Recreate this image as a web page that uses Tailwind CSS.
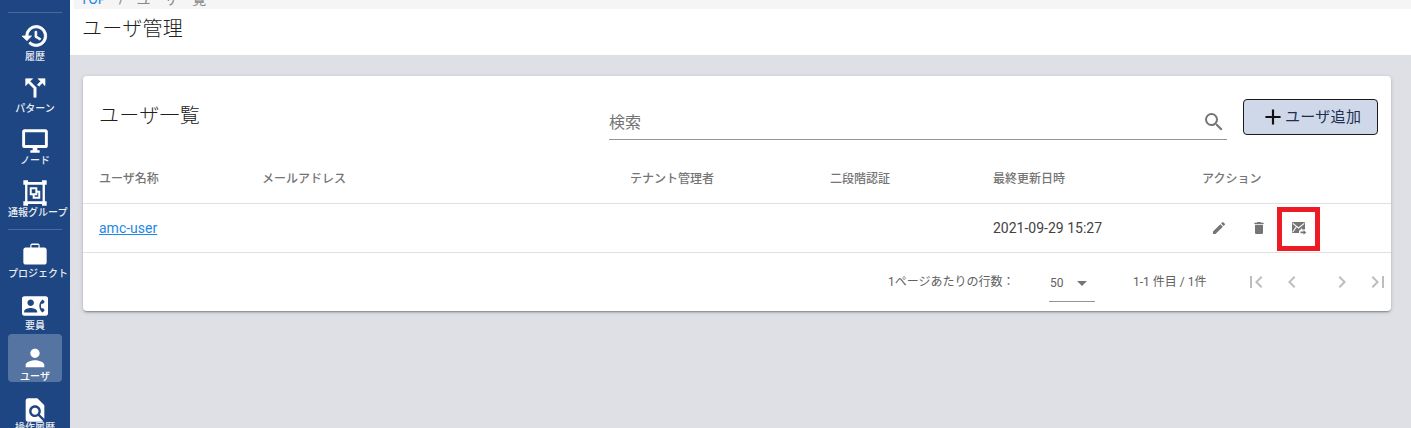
<!DOCTYPE html>
<html lang="ja">
<head>
<meta charset="UTF-8" />
<title>ユーザ管理</title>
<script src="https://cdn.jsdelivr.net/npm/@tailwindcss/browser@4"></script>
</head>
<body class="h-[428px] overflow-hidden bg-[#dfe0e6] font-['Roboto','Noto_Sans_CJK_JP',sans-serif]">
<div class="flex h-[428px]">
  <!-- sidebar -->
  <nav class="w-[70px] shrink-0 bg-[#1e4682] text-[#e8ecf3] flex flex-col items-center overflow-hidden pt-3">
    <div class="w-[54px] border-t border-white/20 mb-[9px] shrink-0"></div>

    <a class="w-[54px] h-[52px] shrink-0 flex flex-col items-center">
      <svg class="w-7 h-7" viewBox="0 0 24 24" fill="#fff" stroke="#fff" stroke-width=".7"><path d="M13 3a9 9 0 0 0-9 9H1l3.9 3.9.1.1L9 12H6a7 7 0 1 1 2.05 4.95L6.64 18.36A9 9 0 1 0 13 3zm-1 5v5l4.25 2.52.77-1.28-3.52-2.09V8z"/></svg>
      <span class="w-full text-center text-[10px] font-medium leading-3 mt-[1px] whitespace-nowrap">履歴</span>
    </a>
    <a class="w-[54px] h-[53px] shrink-0 flex flex-col items-center">
      <svg class="w-7 h-7" viewBox="0 0 24 24" fill="#fff" stroke="#fff" stroke-width=".5"><path d="M14.59 4 16.88 6.29 14 9.17 15.41 10.58 18.29 7.71 20.59 10V4zM10 4H4v6l2.29-2.29L11 12.41V20h2v-8.41L7.71 6.29z"/></svg>
      <span class="w-full text-center text-[10px] font-medium leading-3 mt-[1px] whitespace-nowrap">パターン</span>
    </a>
    <a class="w-[54px] h-[52px] shrink-0 flex flex-col items-center">
      <svg class="w-7 h-7" viewBox="0 0 24 24" fill="#fff"><path d="M21 2H3c-1.1 0-2 .9-2 2v12c0 1.1.9 2 2 2h7v2H8v2h8v-2h-2v-2h7c1.1 0 2-.9 2-2V4c0-1.1-.9-2-2-2zm-.5 13.5h-17v-11h17z"/></svg>
      <span class="w-full text-center text-[10px] font-medium leading-3 whitespace-nowrap">ノード</span>
    </a>
    <a class="w-[54px] h-[50px] shrink-0 flex flex-col items-center">
      <svg class="w-7 h-7" viewBox="0 0 24 24" fill="#fff"><path fill-rule="evenodd" d="M2 1h4v1.500h12V1h4v4h-1.500v14H22v4h-4v-1.500H6V23H2v-4h1.500V5H2zm3.500 4v14h13V5zm2 2h6.500v3h2.500v7H10v-3H7.500zm1.700 1.700v3.600h3.100V8.700zm2.500 5.300v1.300h3.100v-3.600h-.8V14z"/></svg>
      <span class="w-full text-center text-[10px] font-medium leading-3 whitespace-nowrap">通報グループ</span>
    </a>
    <div class="w-[54px] border-t border-white/20 mb-[10px] shrink-0"></div>

    <a class="w-[54px] h-[52px] shrink-0 flex flex-col items-center">
      <svg class="w-7 h-7" viewBox="0 0 24 24" fill="#fff"><path d="M20 6.500h-4V4.500C16 3.400 15.100 3 14 3h-4C8.900 3 8 3.400 8 4.500v2H4c-1.100 0-2 .9-2 2V19c0 1.100.9 2 2 2h16c1.100 0 2-.9 2-2V8.500c0-1.100-.9-2-2-2zm-5 0h-6V4.300h6z"/></svg>
      <span class="w-full text-center text-[10px] font-medium leading-3 whitespace-nowrap">プロジェクト</span>
    </a>
    <a class="w-[54px] h-[42px] shrink-0 flex flex-col items-center">
      <svg class="w-[26px] h-[26px] my-[1px]" viewBox="0 0 24 24" fill="#fff"><path d="M22 3H2C.9 3 0 3.900 0 5v14c0 1.100.9 2 2 2h20c1.100 0 2-.9 2-2V5c0-1.100-.9-2-2-2zM8 6c1.660 0 3 1.340 3 3s-1.340 3-3 3-3-1.340-3-3 1.340-3 3-3zm6 12H2v-1c0-2 4-3.100 6-3.100s6 1.100 6 3.100zm3.850-4h1.640L21 16l-1.990 1.990c-1.310-.98-2.280-2.380-2.730-3.990-.18-.64-.28-1.310-.28-2s.1-1.360.28-2c.45-1.620 1.420-3.010 2.730-3.990L21 8l-1.510 2h-1.640c-.22.63-.35 1.300-.35 2s.13 1.370.35 2z"/></svg>
      <span class="w-full text-center text-[10px] font-medium leading-3 whitespace-nowrap">要員</span>
    </a>
    <a class="w-[54px] h-12 shrink-0 rounded bg-white/25 flex flex-col items-center pt-[10px] text-white">
      <svg class="w-7 h-7 shrink-0" viewBox="0 0 24 24" fill="#fff"><path d="M12 12c2.210 0 4-1.790 4-4s-1.790-4-4-4-4 1.790-4 4 1.790 4 4 4zm0 2c-2.670 0-8 1.340-8 4v2h16v-2c0-2.660-5.330-4-8-4z"/></svg>
      <span class="w-full text-center text-[10px] font-medium leading-3 -mt-[1px] whitespace-nowrap">ユーザ</span>
    </a>
    <a class="w-[54px] h-12 mt-[14px] shrink-0 flex flex-col items-center">
      <svg class="w-7 h-7 shrink-0" viewBox="0 0 24 24" fill="#fff"><path d="M20 19.590V8l-6-6H6c-1.100 0-1.990.9-1.990 2L4 20c0 1.100.89 2 1.990 2H18c.45 0 .85-.15 1.190-.4l-4.430-4.430c-.8.52-1.740.83-2.760.83-2.760 0-5-2.240-5-5s2.240-5 5-5 5 2.240 5 5c0 1.020-.31 1.960-.83 2.750zM9 13c0 1.660 1.340 3 3 3s3-1.340 3-3-1.340-3-3-3-3 1.340-3 3z"/></svg>
      <span class="w-full text-center text-[10px] font-medium leading-3 -mt-[2px] whitespace-nowrap">操作履歴</span>
    </a>
  </nav>

  <!-- main -->
  <main class="flex-1 min-w-0 flex flex-col">
    <div class="bg-white pl-1 shrink-0">
      <div class="h-[9px] bg-[#f5f5f5] pl-[6px] overflow-hidden">
        <div class="-mt-[11px] h-5 flex items-center text-sm leading-5 text-[#888] whitespace-nowrap"><a class="text-[#1e88e5]">TOP</a><span class="mx-3">/</span><span>ユーザ一覧</span></div>
      </div>
    </div>
    <div class="h-[46px] bg-white pl-3 flex items-center shrink-0">
      <h1 class="text-xl font-light tracking-[0.3px] text-[#212121] leading-7 -mt-[6px]">ユーザ管理</h1>
    </div>

    <section class="mt-[21px] ml-[13px] mr-5 h-[235px] bg-white rounded shadow-[0_2px_2px_-1px_rgba(0,0,0,0.35),0_1px_4px_rgba(0,0,0,0.18)] shrink-0">
      <div class="h-[79px] pl-4 pr-[13px] flex items-start">
        <h2 class="w-[510px] pt-[26px] text-xl font-light tracking-[0.3px] leading-7 text-[#212121]">ユーザ一覧</h2>
        <div class="w-[618px] h-[41px] mt-[23px] flex items-center justify-between border-b border-[#949494]">
          <span class="text-base text-[#757575] pt-[7px]">検索</span>
          <svg class="w-6 h-6 mt-[5px] mr-[1px]" viewBox="0 0 24 24" fill="#757575"><path d="M15.500 14h-.79l-.28-.27A6.470 6.470 0 0 0 16 9.500 6.500 6.500 0 1 0 9.500 16c1.610 0 3.090-.59 4.230-1.570l.27.28v.79l5 4.990L20.490 19zm-6 0C7.010 14 5 11.990 5 9.500S7.010 5 9.500 5 14 7.010 14 9.500 11.990 14 9.500 14z"/></svg>
        </div>
        <button class="ml-4 mt-[23px] w-[135px] h-9 rounded border border-[#1a1a1a] bg-[#cfd8e8] flex items-center text-[15px] text-[#1c2f50] tracking-[0.3px] pl-[17px]">
          <svg class="w-[26px] h-[26px] shrink-0 -ml-[1px]" viewBox="0 0 24 24" fill="#111"><path d="M19 13h-6v6h-2v-6H5v-2h6V5h2v6h6z"/></svg>
          <span class="-ml-[1px] whitespace-nowrap">ユーザ追加</span>
        </button>
      </div>

      <div class="grid grid-cols-[163px_368px_200px_163px_209px_1fr] pl-4 h-[49px] items-center border-b border-[#e0e0e0] text-xs font-medium text-[#757575]">
        <div>ユーザ名称</div><div>メールアドレス</div><div>テナント管理者</div><div>二段階認証</div><div>最終更新日時</div><div>アクション</div>
      </div>
      <div class="grid grid-cols-[163px_368px_200px_163px_209px_1fr] pl-4 h-[49px] items-center border-b border-[#e0e0e0] text-sm text-[#424242]">
        <a class="text-[#1e88e5] underline">amc-user</a><div></div><div></div><div></div><div>2021-09-29 15:27</div>
        <div class="flex items-center h-full pl-[9px]">
          <svg class="w-4 h-4" viewBox="0 0 24 24" fill="#757575"><path d="M3 17.250V21h3.750L17.810 9.940l-3.750-3.750zM20.710 7.040a1 1 0 0 0 0-1.410l-2.340-2.340a1 1 0 0 0-1.410 0l-1.830 1.830 3.750 3.750z"/></svg>
          <svg class="w-4 h-4 ml-6" viewBox="0 0 24 24" fill="#757575"><path d="M6 19c0 1.100.9 2 2 2h8c1.100 0 2-.9 2-2V7H6zM19 4h-3.500l-1-1h-5l-1 1H5v2h14z"/></svg>
          <div class="ml-[10px] w-[43px] h-[44px] mt-[1px] border-[5px] border-[#ed1c24] flex items-center justify-center">
            <svg class="w-[15px] h-[13px] ml-[1px]" viewBox="0 0 15 13" fill="#757575"><path d="M1 0h11a1 1 0 0 1 1 1v6.500h-3V6L7 9v2H1a1 1 0 0 1-1-1V1a1 1 0 0 1 1-1z"/><path d="M.8 1.300 6.500 6l5.700-4.700M.8 10 4.500 4.500" fill="none" stroke="#fff" stroke-width="1.100"/><path d="M8.500 9.500h3V8l2.800 2.400-2.800 2.400v-1.500h-3z"/></svg>
          </div>
        </div>
      </div>

      <div class="h-[57px] flex items-center text-xs text-[#616161]">
        <span class="ml-[805px] w-[161px]">1ページあたりの行数：</span>
        <div class="w-[46px] h-[32px] mt-[8px] pb-1 border-b border-[#949494] flex items-center justify-between">
          <span class="pl-[1px]">50</span>
          <svg class="w-6 h-6 mr-[1px]" viewBox="0 0 24 24" fill="#757575"><path d="M7 10l5 5 5-5z"/></svg>
        </div>
        <span class="ml-[38px] w-[111px]">1-1 件目 / 1件</span>
        <div class="flex items-center">
          <svg class="w-6 h-6" viewBox="0 0 24 24" fill="#bdbdbd"><path d="M18.410 16.590 13.820 12l4.590-4.590L17 6l-6 6 6 6zM6 6h2v12H6z"/></svg>
          <svg class="w-6 h-6 ml-[12px]" viewBox="0 0 24 24" fill="#bdbdbd"><path d="M15.410 7.410 14 6l-6 6 6 6 1.410-1.410L10.830 12z"/></svg>
          <svg class="w-6 h-6 ml-[26px]" viewBox="0 0 24 24" fill="#bdbdbd"><path d="M10 6 8.590 7.410 13.170 12l-4.580 4.590L10 18l6-6z"/></svg>
          <svg class="w-6 h-6 ml-3" viewBox="0 0 24 24" fill="#bdbdbd"><path d="M5.590 7.410 10.180 12l-4.590 4.590L7 18l6-6-6-6zM16 6h2v12h-2z"/></svg>
        </div>
      </div>
    </section>
  </main>
</div>
</body>
</html>
